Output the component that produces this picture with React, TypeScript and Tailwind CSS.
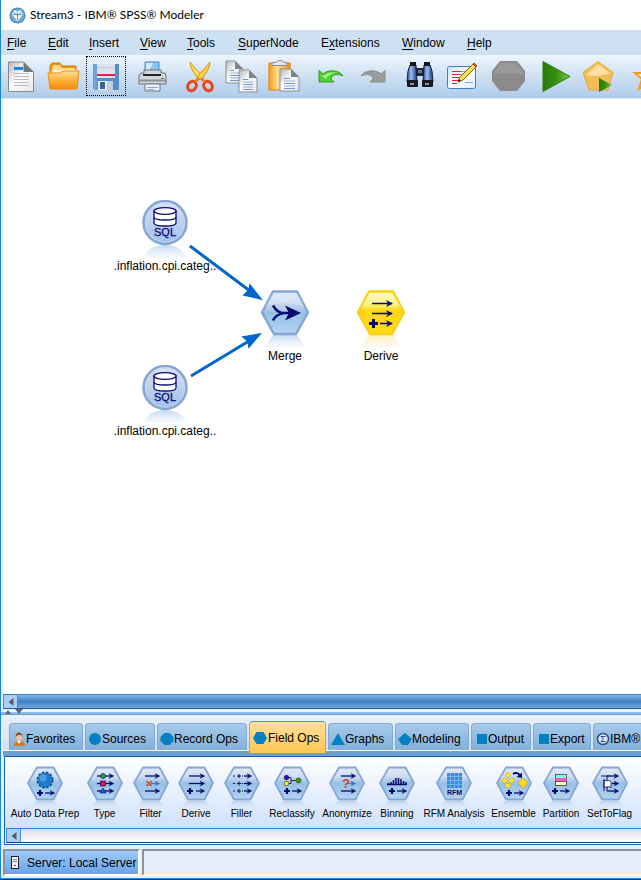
import React from "react";

type IconProps = { children: React.ReactNode };

/* ---------- gradients shared by all drawings ---------- */

function SharedDefs() {
  return (
    <svg className="absolute h-0 w-0" aria-hidden="true">
      <defs>
        <linearGradient id="blueBody" x1="0" y1="0" x2="0" y2="1">
          <stop offset="0" stopColor="#dbe6f6" />
          <stop offset="0.38" stopColor="#b9cfec" />
          <stop offset="0.5" stopColor="#95c1e5" />
          <stop offset="1" stopColor="#b4d4f0" />
        </linearGradient>
        <linearGradient id="circleBody" x1="0" y1="0" x2="0" y2="1">
          <stop offset="0" stopColor="#d9e4f5" />
          <stop offset="0.5" stopColor="#bccfee" />
          <stop offset="1" stopColor="#a3c0e8" />
        </linearGradient>
        <linearGradient id="goldBody" x1="0" y1="0" x2="0" y2="1">
          <stop offset="0" stopColor="#fffbb0" />
          <stop offset="0.35" stopColor="#ffec5a" />
          <stop offset="0.45" stopColor="#ffd613" />
          <stop offset="1" stopColor="#ffdc1c" />
        </linearGradient>
        <linearGradient id="blueMirror" x1="0" y1="0" x2="0" y2="1">
          <stop offset="0" stopColor="#b3cfed" stopOpacity="0.8" />
          <stop offset="1" stopColor="#dbe8f7" stopOpacity="0.2" />
        </linearGradient>
        <linearGradient id="goldMirror" x1="0" y1="0" x2="0" y2="1">
          <stop offset="0" stopColor="#ffe9a8" stopOpacity="0.8" />
          <stop offset="1" stopColor="#fff0d0" stopOpacity="0.3" />
        </linearGradient>
        <linearGradient id="page" x1="0" y1="0" x2="1" y2="1">
          <stop offset="0" stopColor="#b8b8b8" />
          <stop offset="0.45" stopColor="#fdfdfd" />
          <stop offset="1" stopColor="#e6e6e6" />
        </linearGradient>
        <linearGradient id="orange" x1="0" y1="0" x2="0" y2="1">
          <stop offset="0" stopColor="#ffe0a0" />
          <stop offset="0.5" stopColor="#ffb03a" />
          <stop offset="1" stopColor="#f58a0c" />
        </linearGradient>
        <linearGradient id="clip" x1="0" y1="0" x2="1" y2="0">
          <stop offset="0" stopColor="#ff9a10" />
          <stop offset="0.4" stopColor="#ffdf9a" />
          <stop offset="1" stopColor="#ff8c00" />
        </linearGradient>
        <linearGradient id="green" x1="0" y1="0" x2="1" y2="0">
          <stop offset="0" stopColor="#2a7a08" />
          <stop offset="0.5" stopColor="#35900f" />
          <stop offset="1" stopColor="#7cc45a" />
        </linearGradient>
        <linearGradient id="lens" x1="0" y1="0" x2="1" y2="0">
          <stop offset="0" stopColor="#1c3f87" />
          <stop offset="0.4" stopColor="#9cc0f4" />
          <stop offset="1" stopColor="#173474" />
        </linearGradient>
        <linearGradient id="sheet" x1="0" y1="0" x2="1" y2="1">
          <stop offset="0" stopColor="#c6e0f8" />
          <stop offset="0.5" stopColor="#ffffff" />
          <stop offset="1" stopColor="#d6eafc" />
        </linearGradient>
      </defs>
    </svg>
  );
}

/* ---------- toolbar icons ---------- */

function ToolIcon({ children }: IconProps) {
  return (
    <svg viewBox="0 0 40 40" className="block size-10" aria-hidden="true">
      {children}
    </svg>
  );
}

const Page = ({ x, y, w, h, lines }: { x: number; y: number; w: number; h: number; lines: number }) => (
  <g>
    <path d={`M${x} ${y}h${w - 8}l8 8v${h - 8}h${-w}z`} fill="url(#page)" stroke="#8c9096" />
    <path d={`M${x + w - 8} ${y}v8h8z`} fill="#7f8389" />
    {Array.from({ length: lines }, (_, i) => (
      <path
        key={i}
        d={`M${x + 4} ${y + 9.5 + i * 2.5}h${i < 1 ? w - 13 : w - 8}`}
        stroke={i % 2 ? "#8eaee0" : "#6f95d2"}
      />
    ))}
  </g>
);

const NewIcon = () => (
  <ToolIcon>
    <path d="M6.500 6h15l10 10v19.500h-25z" fill="url(#page)" stroke="#85898e" />
    <path d="M21.500 6v10h10z" fill="#73777c" />
    <rect x="12" y="11" width="9" height="3" fill="#1f86e0" />
    {[17, 20, 23, 26, 29].map((y) => (
      <path key={y} d={`M12 ${y + 0.5}h15`} stroke="#b9bcc2" />
    ))}
  </ToolIcon>
);

const OpenIcon = () => (
  <ToolIcon>
    <path d="M6 31V10l2-3h8l2 3h14v21z" fill="#ee9410" stroke="#d97e06" />
    <path d="M9 9h7l2 3h13v5H7z" fill="#ffd88a" />
    <path d="M9 14h25l-3 3H9z" fill="#fff6dd" />
    <path d="M4 17h12l3-2h16l-2 18H6z" fill="url(#orange)" stroke="#ee8a12" />
  </ToolIcon>
);

const SaveIcon = () => (
  <ToolIcon>
    <path d="M7 8h26v26H9l-2-2z" fill="#4f8fcd" />
    <path d="M7 8h4v26H9l-2-2z" fill="#6ba3da" />
    <rect x="11" y="8" width="18" height="10" fill="#dde3ea" />
    <path d="M11 11.500h18" stroke="#c2ccd8" />
    <rect x="11" y="18" width="18" height="2" fill="#d9254e" />
    <rect x="11" y="20" width="18" height="2" fill="#f6dce2" />
    <rect x="12" y="25" width="15" height="9" fill="#e9edf2" />
    <rect x="14" y="26" width="5" height="7" fill="#36689c" />
    <path d="M21 25h6v9h-6z" fill="#c6cdd6" />
  </ToolIcon>
);

const PrintIcon = () => (
  <ToolIcon>
    <path d="M12 6h14v13H12z" fill="#8cc4f2" stroke="#3c8bd0" />
    <path d="M13 7h7l-5 11h-2z" fill="#d6ebfc" />
    <path d="M8 17h3v-3h17v3h4l1 3v8H6v-8z" fill="#d2d5da" stroke="#6c7077" />
    <path d="M10 19h18" stroke="#202227" strokeWidth="2" />
    <path d="M6 24.500h27" stroke="#8c9097" strokeWidth="2" />
    <rect x="28" y="22" width="3" height="1" fill="#38a03a" />
    <path d="M12 28h15v7H12z" fill="#eef4fb" stroke="#72777e" />
    <path d="M14 31.500h11M14 33.500h7" stroke="#7ab0e6" />
  </ToolIcon>
);

const CutIcon = () => (
  <ToolIcon>
    <path d="M10 6c0 5 3 10 9 18l4-3C18 15 13 10 10 6z" fill="#ffdc5a" stroke="#c99a1c" />
    <path d="M30 6c0 5-3 10-9 18l-4-3C22 15 27 10 30 6z" fill="#f9cf3c" stroke="#c99a1c" />
    <ellipse cx="12" cy="30" rx="4" ry="5" transform="rotate(35 12 30)" fill="none" stroke="#e8471e" strokeWidth="3" />
    <ellipse cx="28" cy="30" rx="4" ry="5" transform="rotate(-35 28 30)" fill="none" stroke="#e8471e" strokeWidth="3" />
    <path d="M15 26l4-4M25 26l-4-4" stroke="#ee7d28" strokeWidth="3" />
  </ToolIcon>
);

const CopyIcon = () => (
  <ToolIcon>
    <Page x={4} y={5} w={17} h={22} lines={5} />
    <Page x={17} y={14} w={18} h={22} lines={5} />
  </ToolIcon>
);

const PasteIcon = () => (
  <ToolIcon>
    <path d="M5 7h21v27H5z" fill="url(#clip)" stroke="#e87d04" />
    <path d="M8 9.500h15V7l-4-1c0-2-6-2-6 0l-5 1z" fill="#e4e6e8" stroke="#8a8d92" />
    <Page x={16} y={13} w={19} h={22} lines={5} />
  </ToolIcon>
);

const UndoIcon = () => (
  <ToolIcon>
    <path d="M8 14.500l4 3.500c6-5 16-4 20 2-7-3-11-1-12 3l3 3H8z" fill="#55cf35" stroke="#2f9a1c" />
    <path d="M9 19l3 1c5-4 10-4 14-3-6 0-10 3-11 6z" fill="#a5f18b" />
  </ToolIcon>
);

const RedoIcon = () => (
  <ToolIcon>
    <path d="M32 14.500l-4 3.500c-6-5-16-4-20 2 7-3 11-1 12 3l-3 3h15z" fill="#9c9c9c" stroke="#8c8c8c" />
  </ToolIcon>
);

const FindIcon = () => (
  <ToolIcon>
    <rect x="16" y="12" width="8" height="8" fill="#20242c" />
    <rect x="18" y="14" width="4" height="3" fill="#6f7680" />
    <path d="M10 9h6l1 17H7l1-11z" fill="url(#lens)" stroke="#0e1d42" />
    <path d="M24 9h6l2 6 1 11H23z" fill="url(#lens)" stroke="#0e1d42" />
    <rect x="10" y="6" width="6" height="4" fill="#14171d" />
    <rect x="24" y="6" width="6" height="4" fill="#14171d" />
    <rect x="7" y="24" width="11" height="7" rx="1" fill="#17191e" />
    <rect x="22" y="24" width="11" height="7" rx="1" fill="#17191e" />
    <path d="M10 28h4M25 28h4" stroke="#8b919b" strokeWidth="2" />
  </ToolIcon>
);

const EditIcon = () => (
  <ToolIcon>
    <rect x="5.500" y="10.500" width="28" height="22" rx="2" fill="url(#sheet)" stroke="#3f7fc4" />
    <path d="M10 15.500h9M10 18.500h8M10 21.500h8M10 24.500h6M10 27.500h5" stroke="#d22a2a" />
    <path d="M19 15.500h5M18 18.500h3M23 26.500h8" stroke="#8aa6c6" />
    <path d="M31 8l3 3-13 13-5 2 2-5z" fill="#ffdf4e" stroke="#7a6420" />
    <path d="M31 8l1-1 3 3-1 1z" fill="#e05a2a" stroke="#b04018" />
    <path d="M16 26l1-3 2 2z" fill="#222" />
  </ToolIcon>
);

const StopIcon = () => (
  <ToolIcon>
    <path d="M11 5h17l8 10v10l-8 10H11L3 25V15z" fill="#8b8b8b" />
    <path d="M12 7h15l7 9v3c-8-2-20-2-29 0v-3z" fill="#999" />
  </ToolIcon>
);

const PlayIcon = () => (
  <ToolIcon>
    <path d="M7 5.500l27 15-27 15z" fill="url(#green)" stroke="#2b7d0c" />
  </ToolIcon>
);

const RunSelIcon = () => (
  <ToolIcon>
    <path d="M20 5.500l15 11-5 17.500H11L5 16.500z" fill="#f2bd55" stroke="#e0a63e" />
    <path d="M20 8l12 9c-7 3-16 4-24 2z" fill="#ffe0a2" />
    <path d="M21 22l13 7-13 7z" fill="url(#green)" />
  </ToolIcon>
);

const StarIcon = () => (
  <ToolIcon>
    <path d="M15 17h9l3-10 4 10h9l-7 6 3 10-9-6-8 6 3-10z" fill="#fff3d8" stroke="#f39a1e" strokeWidth="2" />
  </ToolIcon>
);

const toolGroups = [
  [
    { name: "New", icon: <NewIcon /> },
    { name: "Open", icon: <OpenIcon /> },
    { name: "Save", icon: <SaveIcon />, focused: true },
  ],
  [{ name: "Print", icon: <PrintIcon /> }],
  [
    { name: "Cut", icon: <CutIcon /> },
    { name: "Copy", icon: <CopyIcon /> },
    { name: "Paste", icon: <PasteIcon /> },
  ],
  [
    { name: "Undo", icon: <UndoIcon /> },
    { name: "Redo", icon: <RedoIcon /> },
  ],
  [
    { name: "Find", icon: <FindIcon /> },
    { name: "Stream properties", icon: <EditIcon /> },
  ],
  [{ name: "Stop", icon: <StopIcon /> }],
  [
    { name: "Run", icon: <PlayIcon /> },
    { name: "Run selection", icon: <RunSelIcon /> },
    { name: "Add to favorites", icon: <StarIcon /> },
  ],
] as { name: string; icon: React.ReactNode; focused?: boolean }[][];

/* ---------- stream nodes ---------- */

function SqlNode() {
  return (
    <svg viewBox="0 0 48 58" className="block h-[58px] w-12" aria-hidden="true">
      <path d="M3 58C5 50 13 45 24 45s19 5 21 13z" fill="url(#blueMirror)" />
      <circle cx="24" cy="22.500" r="21.500" fill="url(#circleBody)" stroke="#86a6d6" strokeWidth="2.500" />
      <circle cx="24" cy="22.500" r="19.500" fill="none" stroke="#c9daf2" strokeOpacity="0.700" />
      <path d="M13 11v12c0 4 22 4 22 0V11z" fill="#fff" stroke="#0b0b78" strokeWidth="1.300" />
      <path d="M13 17c0 4 22 4 22 0" fill="none" stroke="#0b0b78" strokeWidth="1.300" />
      <ellipse cx="24" cy="11" rx="11" ry="3.300" fill="#fff" stroke="#0b0b78" strokeWidth="1.300" />
      <text x="24" y="35.500" textAnchor="middle" fontSize="11" fill="#0b0b78" stroke="#0b0b78" strokeWidth="0.300" fontFamily="'Liberation Sans', Arial, sans-serif">
        SQL
      </text>
    </svg>
  );
}

function HexNode({ gold = false, children }: { gold?: boolean; children: React.ReactNode }) {
  return (
    <svg viewBox="0 0 48 58" className="block h-[58px] w-12" aria-hidden="true">
      <path d="M12 45h24l8 12H4z" fill={gold ? "url(#goldMirror)" : "url(#blueMirror)"} />
      <path
        d="M12 1.500h24L47 22.500 35 44H13L1 22.500z"
        fill={gold ? "url(#goldBody)" : "url(#blueBody)"}
        stroke={gold ? "#f8cf1a" : "#86a6d6"}
        strokeWidth="2.500"
        strokeLinejoin="round"
      />
      <path d="M4 17c10-5 30-5 40 0L36 3H12z" fill="#fff" fillOpacity="0.250" />
      {children}
    </svg>
  );
}

const MergeNode = () => (
  <HexNode>
    <path d="M12 15.500c3 5 6 7.500 10 7.500s-7 0-10 7.500M18 23h13" fill="none" stroke="#0a0a6e" strokeWidth="2.500" />
    <path d="M24 15.500l16 7.500-16 7.500 4-7.500z" fill="#0a0a6e" />
  </HexNode>
);

const DeriveNode = () => (
  <HexNode gold>
    <path d="M15 13.500h20M15 23.500h20M23 33.500h12" stroke="#0a0a6e" strokeWidth="1.500" />
    <path d="M29 10l7 3.500-7 3.500 2-3.500zM29 20l7 3.500-7 3.500 2-3.500zM29 30l7 3.500-7 3.500 2-3.500z" fill="#0a0a6e" />
    <path d="M12 33.500h9M16.500 29v9" stroke="#0a0a6e" strokeWidth="3" />
  </HexNode>
);

const nodes = [
  { label: ".inflation.cpi.categ..", icon: <SqlNode />, place: "left-[105px] top-[101px]" },
  { label: ".inflation.cpi.categ..", icon: <SqlNode />, place: "left-[105px] top-[266px]" },
  { label: "Merge", icon: <MergeNode />, place: "left-[225px] top-[191px]" },
  { label: "Derive", icon: <DeriveNode />, place: "left-[321px] top-[191px]" },
];

/* ---------- palette ---------- */

const INK = "#0a0a6e";

const Arrow = ({ x, y, w, color = INK }: { x: number; y: number; w: number; color?: string }) => (
  <g stroke={color} fill={color}>
    <path d={`M${x} ${y}h${w - 2}`} strokeWidth="1.300" />
    <path d={`M${x + w - 5} ${y - 2.5}l5 2.500-5 2.500 1.500-2.500z`} strokeWidth="0.300" />
  </g>
);

const Plus = ({ x, y }: { x: number; y: number }) => (
  <path d={`M${x - 3} ${y}h6M${x} ${y - 3}v6`} stroke={INK} strokeWidth="2.200" />
);

function MiniHex({ children }: IconProps) {
  return (
    <svg viewBox="0 0 36 42" className="block h-[42px] w-9 shrink-0" aria-hidden="true">
      <path d="M9 35h18l6 7H3z" fill="url(#blueMirror)" />
      <path d="M10 1.500h16.500L35 17l-8.500 16.500H10L1 17z" fill="url(#blueBody)" stroke="#86a6d6" strokeWidth="1.800" strokeLinejoin="round" />
      <path d="M4 13c8-3 20-3 28 0L26 3H10z" fill="#fff" fillOpacity="0.200" />
      {children}
    </svg>
  );
}

const paletteNodes = [
  {
    label: "Auto Data Prep",
    art: (
      <>
        <circle cx="18" cy="14" r="7.500" fill="#1f7ccc" stroke="#0e4f92" strokeWidth="2" strokeDasharray="2.500 1.500" />
        <circle cx="18" cy="14" r="7" fill="#1f7ccc" />
        <circle cx="16" cy="12" r="3.500" fill="#4a9fe2" />
        <Plus x={13} y={27} />
        <Arrow x={18} y={27} w={10} />
      </>
    ),
  },
  {
    label: "Type",
    art: (
      <>
        <Arrow x={10} y={10} w={17} />
        <Arrow x={10} y={17.5} w={17} />
        <Arrow x={10} y={25} w={17} />
        <circle cx="16" cy="10" r="2.500" fill="#15a040" stroke={INK} strokeWidth="0.600" />
        <rect x="13.500" y="15" width="5" height="5" fill="#e01040" stroke={INK} strokeWidth="0.600" />
        <path d="M16 22l3 5h-6z" fill="#2060e0" stroke={INK} strokeWidth="0.600" />
      </>
    ),
  },
  {
    label: "Filter",
    art: (
      <>
        <Arrow x={12} y={10} w={15} />
        <Arrow x={18} y={17.5} w={9} color="#3a7ab8" />
        <Arrow x={12} y={25} w={15} />
        <path d="M13.500 15l5 5M18.500 15l-5 5" stroke="#d04a2c" strokeWidth="1.600" />
      </>
    ),
  },
  {
    label: "Derive",
    art: (
      <>
        <Arrow x={11} y={10} w={16} />
        <Arrow x={11} y={17.5} w={16} />
        <Plus x={12} y={25} />
        <Arrow x={18} y={25} w={9} />
      </>
    ),
  },
  {
    label: "Filler",
    art: (
      <>
        {[10, 17.5, 25].map((y) => (
          <g key={y}>
            <path d={`M9 ${y}h2M13 ${y}h4M15 ${y - 2}v4M18 ${y}h1`} stroke={INK} />
            <Arrow x={20} y={y} w={8} />
          </g>
        ))}
      </>
    ),
  },
  {
    label: "Reclassify",
    art: (
      <>
        <path d="M13 11.500h4v6h-4M17 14.500h6" fill="none" stroke="#303030" />
        <circle cx="12.500" cy="11.500" r="2.300" fill="#2a10c0" stroke="#111" strokeWidth="0.600" />
        <circle cx="12.500" cy="17.500" r="2.300" fill="#ffee10" stroke="#333" strokeWidth="0.600" />
        <circle cx="24.500" cy="14.500" r="2.500" fill="#20b010" stroke="#222" strokeWidth="0.600" />
        <Plus x={13} y={25} />
        <Arrow x={18} y={25} w={10} />
      </>
    ),
  },
  {
    label: "Anonymize",
    art: (
      <>
        <Arrow x={12} y={10} w={15} />
        <Arrow x={19} y={17.5} w={8} color="#3a7ab8" />
        <Arrow x={12} y={25} w={15} />
        <text x="17" y="22" textAnchor="middle" fontSize="13" fontWeight="bold" fill="#d0402c" fontFamily="'Liberation Sans', Arial, sans-serif">
          ?
        </text>
      </>
    ),
  },
  {
    label: "Binning",
    art: (
      <>
        <path d="M8 18.500h20M9.500 18v-1M12 18v-2M14.500 18v-4M17 18v-6M19.500 18v-6M22 18v-5M24.500 18v-3M27 18v-2" stroke={INK} strokeWidth="1.500" />
        <Plus x={13} y={25} />
        <Arrow x={18} y={25} w={10} />
      </>
    ),
  },
  {
    label: "RFM Analysis",
    art: (
      <>
        <rect x="11" y="7" width="15" height="15" fill="#3a8be4" />
        <path d="M11 10.500h15M11 14.500h15M11 18.500h15M14.500 7v15M18.500 7v15M22.500 7v15" stroke="#86bcf2" strokeWidth="0.800" />
        <text x="18.500" y="29" textAnchor="middle" fontSize="7" fontWeight="bold" fill={INK} fontFamily="'Liberation Sans', Arial, sans-serif">
          RFM
        </text>
      </>
    ),
  },
  {
    label: "Ensemble",
    art: (
      <>
        <path d="M12 6l3 3-3 3-3-3zM8.500 11.500l3 3-3 3-3-3zM15.500 11.500l3 3-3 3-3-3zM12 16.500l3 3-3 3-3-3z" fill="#ffe21a" stroke="#c79c10" strokeWidth="0.500" />
        <path d="M27 12l5 5-5 5-5-5z" fill="#ffdc10" stroke="#c79c10" strokeWidth="0.700" />
        <path d="M17 8c3-2 6-1 7 2" fill="none" stroke={INK} strokeWidth="2" />
        <path d="M20.500 11l5.500 1V6.500z" fill={INK} />
        <Plus x={13} y={27} />
        <Arrow x={18} y={27} w={10} />
      </>
    ),
  },
  {
    label: "Partition",
    art: (
      <>
        <rect x="12.500" y="8.500" width="11" height="11" fill="#8ff0e4" stroke="#333" strokeWidth="0.700" />
        <rect x="12.500" y="12" width="11" height="3.500" fill="#f05ac0" />
        <rect x="12.500" y="15.500" width="11" height="4" fill="#fff2b0" stroke="#333" strokeWidth="0.700" />
        <Plus x={12} y={25} />
        <Arrow x={17} y={25} w={10} />
      </>
    ),
  },
  {
    label: "SetToFlag",
    art: (
      <>
        <path d="M9 10h8M15 10v15" stroke={INK} fill="none" />
        <Arrow x={15} y={10} w={12} />
        <Arrow x={20} y={17.5} w={7} />
        <Arrow x={15} y={25} w={12} />
        <path d="M12 14c3 2 5-1 7 2v6c-2-3-4 0-7-1z" fill="#fff" stroke={INK} strokeWidth="0.800" />
        <path d="M12 13v12" stroke={INK} />
      </>
    ),
  },
];

function TabIcon({ children }: IconProps) {
  return (
    <svg viewBox="0 0 14 14" className="block size-3.5 shrink-0" fill="#0480c4" aria-hidden="true">
      {children}
    </svg>
  );
}

const tabs = [
  {
    label: "Favorites",
    icon: (
      <TabIcon>
        <path d="M2 14c0-3 1-5 5-5s6 2 6 5z" fill="#e87418" />
        <path d="M5 9l2 3 2-3z" fill="#fff" />
        <ellipse cx="7" cy="5" rx="3" ry="4" fill="#f3c29a" />
        <path d="M3.500 5c0-6 7-6 7 0L9 3H6z" fill="#8a4a1c" />
      </TabIcon>
    ),
  },
  { label: "Sources", icon: <TabIcon><circle cx="7" cy="7" r="6" /></TabIcon> },
  { label: "Record Ops", icon: <TabIcon><path d="M4.500 1h5L13.500 5v4l-4 4h-5l-4-4V5z" /></TabIcon> },
  { label: "Field Ops", icon: <TabIcon><path d="M3.500 1h7L14 7l-3.500 6h-7L0 7z" /></TabIcon>, active: true },
  { label: "Graphs", icon: <TabIcon><path d="M7 1l7 12H0z" /></TabIcon> },
  { label: "Modeling", icon: <TabIcon><path d="M7 1l7 6-4 6H4L0 7z" /></TabIcon> },
  { label: "Output", icon: <TabIcon><path d="M3 2h10v10H3z" /></TabIcon> },
  { label: "Export", icon: <TabIcon><path d="M3 2h10v10H3z" /></TabIcon> },
  {
    label: "IBM®",
    icon: (
      <TabIcon>
        <circle cx="7" cy="7" r="5.500" fill="#dbe8f8" stroke="#2a4c8e" strokeWidth="1.500" />
        <path d="M9.500 4.500H5L7.500 7 5 9.500h4.500" fill="none" stroke="#2a4c8e" />
      </TabIcon>
    ),
  },
] as { label: string; icon: React.ReactNode; active?: boolean }[];

const menus = ["File", "Edit", "Insert", "View", "Tools", "SuperNode", "Extensions", "Window", "Help"];

function MenuLabel({ text }: { text: string }) {
  const at = text === "Extensions" ? 1 : 0;
  return (
    <>
      {text.slice(0, at)}
      <span className="underline underline-offset-2">{text[at]}</span>
      {text.slice(at + 1)}
    </>
  );
}

function ScrollLeft() {
  return (
    <button type="button" aria-label="Scroll left" className="flex h-[13px] w-3.5 shrink-0 items-center justify-center border-r border-[#3f8fe0] bg-[#a9cff8]">
      <svg viewBox="0 0 6 8" className="h-2 w-1.5" aria-hidden="true">
        <path d="M5.500 0v8L0.500 4z" fill="#5a5a5a" />
      </svg>
    </button>
  );
}

export default function App() {
  return (
    <div className="flex min-h-screen flex-col overflow-hidden bg-[#e4effa] font-['Liberation_Sans',Arial,sans-serif] text-xs text-black">
      <SharedDefs />
      <div className="flex flex-1 flex-col overflow-hidden border-l border-[#1a86dc]">
        <header className="flex h-[30px] shrink-0 items-center gap-1 bg-white pl-2">
          <svg viewBox="0 0 18 18" className="size-[17px]" aria-hidden="true">
            <circle cx="9" cy="9" r="8.500" fill="#4a8dc2" />
            <circle cx="9" cy="9" r="7" fill="#79add6" />
            <path d="M9 15L3.500 8 4 5l2.500-1.500L9 5l2.500-1.500L14 5l.5 3z" fill="#f2f9fd" />
            <path d="M9 5v9M4 8h10M4 5l5 4 5-4" stroke="#4a8dc2" strokeWidth="0.900" fill="none" />
          </svg>
          <h1 className="whitespace-nowrap font-[Lato,'Open_Sans',sans-serif] text-xs">Stream3 - IBM® SPSS® Modeler</h1>
        </header>

        <nav aria-label="Main menu" className="grid h-[25px] shrink-0 grid-cols-[41px_41px_51px_47px_51px_83px_81px_65px_40px] items-center bg-[#cee1f3] pl-1.5">
          {menus.map((m) => (
            <button key={m} type="button" className="text-left leading-4">
              <MenuLabel text={m} />
            </button>
          ))}
        </nav>

        <div role="toolbar" aria-label="Stream toolbar" className="flex h-[43px] shrink-0 gap-[7px] overflow-hidden border-b border-[#a9c6e6] bg-linear-to-b from-[#eef5fd] via-[#cfe0f2] to-[#b0cce9] pt-px pl-px">
          {toolGroups.map((group, i) => (
            <div key={i} className="flex shrink-0 gap-0.5">
              {group.map((t) => (
                <button
                  key={t.name}
                  type="button"
                  aria-label={t.name}
                  className={t.focused ? "size-10 outline-1 -outline-offset-1 outline-dotted outline-black" : "size-10"}
                >
                  {t.icon}
                </button>
              ))}
            </div>
          ))}
        </div>

        <main className="relative ml-0.5 min-h-[360px] flex-1 overflow-hidden border-t border-[#e4effa] bg-white">
          {nodes.map((n, i) => (
            <figure key={i} className={`absolute flex w-[114px] flex-col items-center ${n.place}`}>
              {n.icon}
              <figcaption className="whitespace-nowrap leading-4">{n.label}</figcaption>
            </figure>
          ))}
          <svg className="absolute left-0 top-0 h-[400px] w-[420px]" viewBox="3 99 420 400" aria-hidden="true">
            <g fill="#0066cc" stroke="#0066cc">
              <path d="M190 246L250 291M191 376L249 341" strokeWidth="3" />
              <path d="M261 299l-11-14-1 5-5 5zM260 334l-17 3 5 4 1 6z" strokeWidth="1.500" />
            </g>
          </svg>
        </main>

        <div className="ml-0.5 flex h-[15px] shrink-0 border-t border-b border-t-[#2a84dc] border-b-[#1c5a9c] border-l border-l-[#3f8fe0] bg-linear-to-b from-[#86b4e2] via-[#3d80c4] to-[#6fa6da]">
          <ScrollLeft />
        </div>

        <div className="flex h-1.5 shrink-0 items-center gap-1.5 border-b border-[#6b98cc] bg-linear-to-b from-[#eaf3fc] from-50% to-[#8fbdf0] to-50% pl-1">
          <svg viewBox="0 0 18 5" className="h-[5px] w-[18px]" fill="#666" aria-hidden="true">
            <path d="M0 5l3-4 3 4zM10 0h8l-4 5z" />
          </svg>
        </div>

        <section aria-label="Node palettes" className="ml-0.5 shrink-0 bg-[#e4effa]">
          <div role="tablist" className="grid h-[35px] grid-cols-[74px_70px_90px_77px_65px_74px_60px_58px_74px] items-end gap-0.5 bg-linear-to-b from-[#e9f2fd] to-[#cfdff2] pl-1.5">
            {tabs.map((t) => (
              <button
                key={t.label}
                type="button"
                role="tab"
                aria-selected={!!t.active}
                className={
                  t.active
                    ? "relative -mb-[3px] flex h-8 items-center gap-px whitespace-nowrap rounded-t border border-b-0 border-[#c9a24a] border-t-[#5f8fc6] bg-linear-to-b from-[#ffe09a] to-[#ffc64e] pl-[3px]"
                    : "flex h-[27px] items-center whitespace-nowrap rounded-t border border-b-0 border-[#7fa9d6] bg-linear-to-b from-[#a6caea] to-[#82afdc] pt-1 pl-0.5"
                }
              >
                {t.icon}
                {t.label}
              </button>
            ))}
          </div>
          <div className="h-1.5 border-t border-white bg-[#6f9fd2]" />
          <div className="ml-px border-y border-l border-[#1564b4]">
            <div role="tabpanel" aria-label="Field Ops" className="grid h-[71px] grid-cols-[64px_37px_37px_36px_37px_46px_46px_36px_60px_41px_36px_43px] justify-items-center gap-[9px] overflow-hidden bg-linear-to-b from-white to-[#cfe1fb] pt-[9px] pl-2 text-[10px]">
              {paletteNodes.map((n) => (
                <button key={n.label} type="button" className="flex w-9 flex-col items-center">
                  <MiniHex>{n.art}</MiniHex>
                  <span className="whitespace-nowrap leading-3">{n.label}</span>
                </button>
              ))}
            </div>
            <div className="ml-px flex h-[15px] border-t border-b border-l border-t-[#2a84dc] border-b-[#103f74] border-l-[#3f8fe0] bg-linear-to-b from-[#dcdce2] to-white">
              <ScrollLeft />
            </div>
            <div className="h-px bg-white" />
          </div>
        </section>

        <footer className="flex h-[33px] shrink-0 gap-0.5 pt-1 pl-0.5">
          <div className="flex h-[27px] items-center gap-2 border-2 border-[#8a929c] border-r-white border-b-white bg-linear-to-b from-[#9fcafa] to-[#66a4e8] pl-1.5 pr-0.5">
            <svg viewBox="0 0 8 13" className="h-[13px] w-2" aria-hidden="true">
              <rect x="0.500" y="0.500" width="7" height="12" fill="#f2f2f2" stroke="#222" />
              <path d="M2 3.500h4M2 5.500h4" stroke="#888" />
              <rect x="3" y="9" width="2" height="1" fill="#444" />
            </svg>
            <span className="whitespace-nowrap">Server: Local Server</span>
          </div>
          <div className="h-[27px] flex-1 border-t-2 border-b-2 border-l-2 border-[#8a929c] border-b-white bg-[#e4effb]" />
        </footer>
      </div>
      <div className="h-0.5 shrink-0 border-t border-[#1a86dc] bg-[#0d3f6c]" />
    </div>
  );
}
